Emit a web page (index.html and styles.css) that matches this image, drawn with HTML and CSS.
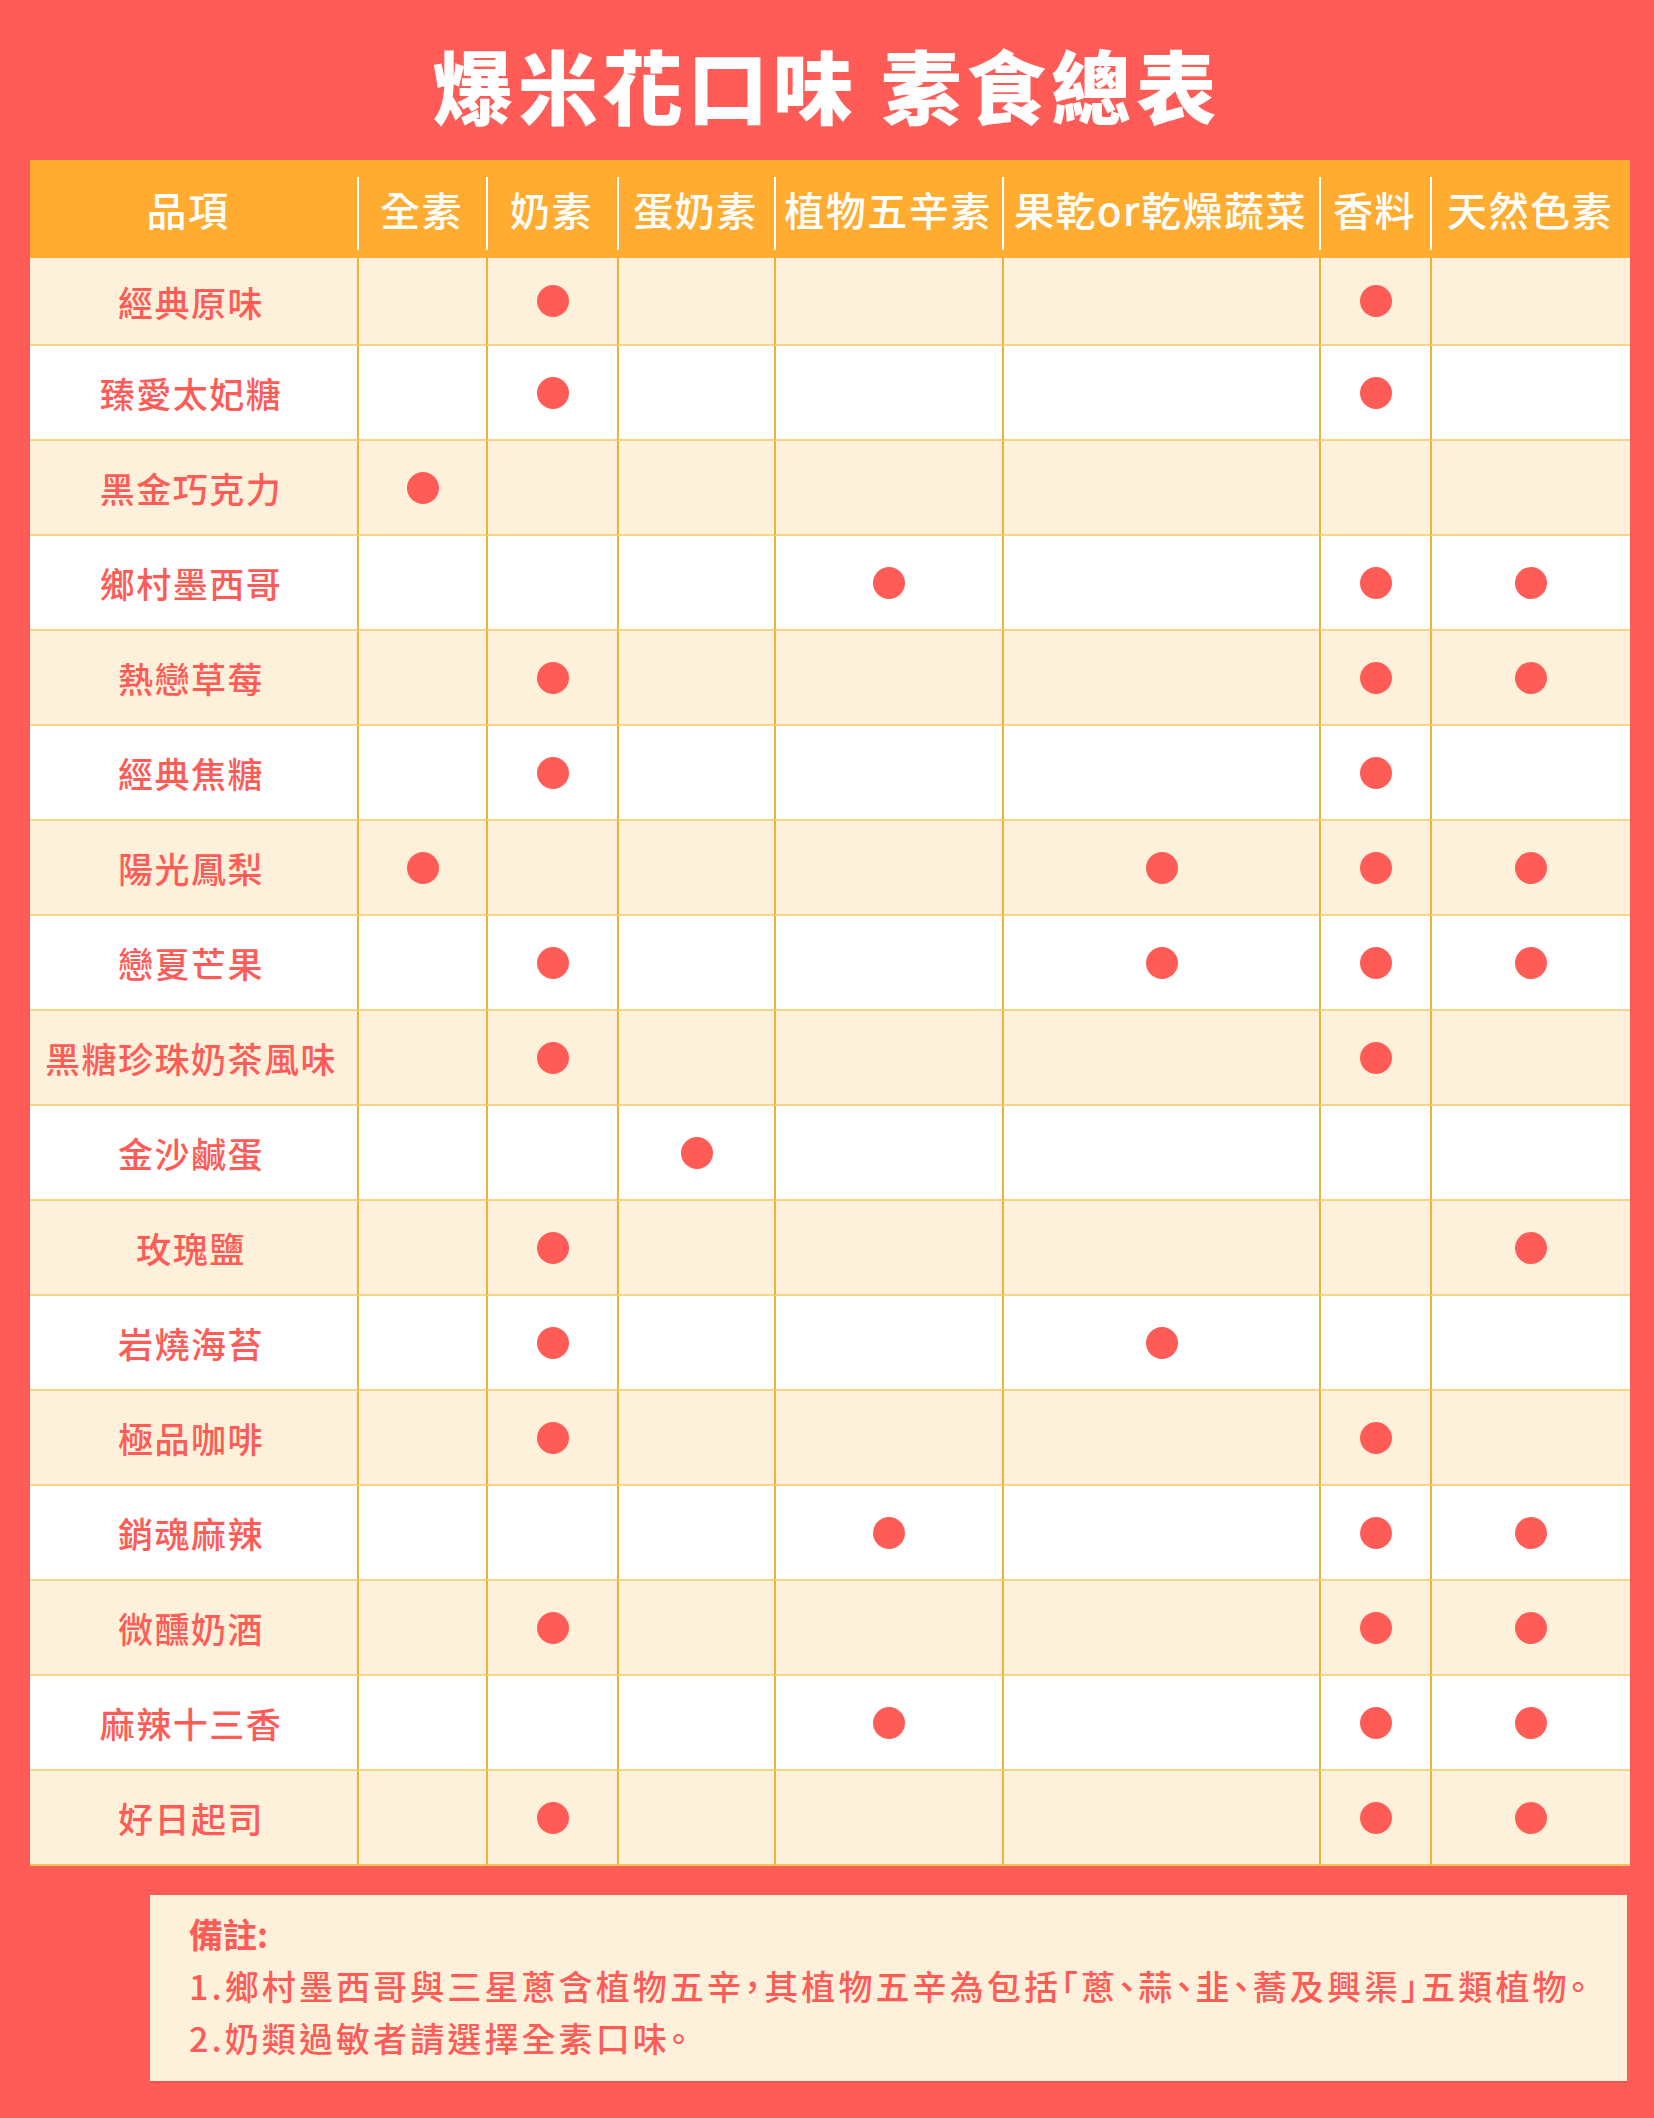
FILE: index.html
```html
<!DOCTYPE html>
<html lang="zh-Hant">
<head>
<meta charset="utf-8">
<title>爆米花口味 素食總表</title>
<link rel="stylesheet" href="styles.css">
</head>
<body>
<div class="page">
  <h1 class="title">爆米花口味 素食總表</h1>

  <table class="veg-table">
    <colgroup>
      <col class="c-name">
      <col class="c-vegan">
      <col class="c-lacto">
      <col class="c-ovo">
      <col class="c-five">
      <col class="c-fruit">
      <col class="c-spice">
      <col class="c-color">
    </colgroup>
    <thead>
      <tr>
        <th class="name">品項</th>
        <th>全素</th>
        <th>奶素</th>
        <th>蛋奶素</th>
        <th>植物五辛素</th>
        <th>果乾or乾燥蔬菜</th>
        <th>香料</th>
        <th>天然色素</th>
      </tr>
    </thead>
    <tbody>
      <tr class="first"><td class="name">經典原味</td><td></td><td><span class="dot"></span></td><td></td><td></td><td></td><td><span class="dot"></span></td><td></td></tr>
      <tr><td class="name">臻愛太妃糖</td><td></td><td><span class="dot"></span></td><td></td><td></td><td></td><td><span class="dot"></span></td><td></td></tr>
      <tr><td class="name">黑金巧克力</td><td><span class="dot"></span></td><td></td><td></td><td></td><td></td><td></td><td></td></tr>
      <tr><td class="name">鄉村墨西哥</td><td></td><td></td><td></td><td><span class="dot"></span></td><td></td><td><span class="dot"></span></td><td><span class="dot"></span></td></tr>
      <tr><td class="name">熱戀草莓</td><td></td><td><span class="dot"></span></td><td></td><td></td><td></td><td><span class="dot"></span></td><td><span class="dot"></span></td></tr>
      <tr><td class="name">經典焦糖</td><td></td><td><span class="dot"></span></td><td></td><td></td><td></td><td><span class="dot"></span></td><td></td></tr>
      <tr><td class="name">陽光鳳梨</td><td><span class="dot"></span></td><td></td><td></td><td></td><td><span class="dot"></span></td><td><span class="dot"></span></td><td><span class="dot"></span></td></tr>
      <tr><td class="name">戀夏芒果</td><td></td><td><span class="dot"></span></td><td></td><td></td><td><span class="dot"></span></td><td><span class="dot"></span></td><td><span class="dot"></span></td></tr>
      <tr><td class="name">黑糖珍珠奶茶風味</td><td></td><td><span class="dot"></span></td><td></td><td></td><td></td><td><span class="dot"></span></td><td></td></tr>
      <tr><td class="name">金沙鹹蛋</td><td></td><td></td><td><span class="dot"></span></td><td></td><td></td><td></td><td></td></tr>
      <tr><td class="name">玫瑰鹽</td><td></td><td><span class="dot"></span></td><td></td><td></td><td></td><td></td><td><span class="dot"></span></td></tr>
      <tr><td class="name">岩燒海苔</td><td></td><td><span class="dot"></span></td><td></td><td></td><td><span class="dot"></span></td><td></td><td></td></tr>
      <tr><td class="name">極品咖啡</td><td></td><td><span class="dot"></span></td><td></td><td></td><td></td><td><span class="dot"></span></td><td></td></tr>
      <tr><td class="name">銷魂麻辣</td><td></td><td></td><td></td><td><span class="dot"></span></td><td></td><td><span class="dot"></span></td><td><span class="dot"></span></td></tr>
      <tr><td class="name">微醺奶酒</td><td></td><td><span class="dot"></span></td><td></td><td></td><td></td><td><span class="dot"></span></td><td><span class="dot"></span></td></tr>
      <tr><td class="name">麻辣十三香</td><td></td><td></td><td></td><td><span class="dot"></span></td><td></td><td><span class="dot"></span></td><td><span class="dot"></span></td></tr>
      <tr><td class="name">好日起司</td><td></td><td><span class="dot"></span></td><td></td><td></td><td></td><td><span class="dot"></span></td><td><span class="dot"></span></td></tr>
    </tbody>
  </table>

  <div class="notes">
    <p class="notes-title">備註:</p>
    <p class="notes-line">1.鄉村墨西哥與三星蔥含植物五辛，其植物五辛為包括「蔥、蒜、韭、蕎及興渠」五類植物。</p>
    <p class="notes-line">2.奶類過敏者請選擇全素口味。</p>
  </div>
</div>
</body>
</html>
```

FILE: styles.css
```css
* {
  box-sizing: border-box;
}

html, body {
  margin: 0;
  padding: 0;
}

body {
  background: #ff5c57;
  font-family: "Noto Sans CJK TC", "Noto Sans CJK SC", "Noto Sans", sans-serif;
  color: #ff5c57;
}

.page {
  width: 1654px;
  min-height: 2118px;
  padding: 0 0 0 30px;
}

.title {
  margin: 0;
  height: 160px;
  padding-top: 43px;
  padding-right: 30px;
  font-size: 80px;
  line-height: 80px;
  font-weight: 900;
  letter-spacing: 5px;
  color: #ffffff;
  text-align: center;
}

.veg-table {
  width: 1600px;
  table-layout: fixed;
  border-collapse: separate;
  border-spacing: 0;
}

.c-name { width: 327px; }
.c-vegan { width: 129px; }
.c-lacto { width: 131px; }
.c-ovo { width: 157px; }
.c-five { width: 228px; }
.c-fruit { width: 317px; }
.c-spice { width: 111px; }
.c-color { width: 200px; }

.veg-table thead tr {
  height: 98px;
}

.veg-table th {
  padding: 0;
  background-color: #ffac31;
  color: #ffffff;
  font-size: 40px;
  font-weight: 500;
  letter-spacing: 1.5px;
  text-align: center;
  vertical-align: middle;
  white-space: nowrap;
}

.veg-table th + th {
  background-image: linear-gradient(#ffffff, #ffffff);
  background-repeat: no-repeat;
  background-position: 0 17px;
  background-size: 2px 73px;
}

.veg-table th.name {
  padding-right: 11px;
}

.veg-table tbody tr {
  height: 95px;
}

.veg-table tbody tr.first {
  height: 88px;
}

.veg-table tbody tr:nth-child(odd) td {
  background: #fef1db;
}

.veg-table tbody tr:nth-child(even) td {
  background: #ffffff;
}

.veg-table td {
  padding: 0;
  border-bottom: 2px solid #f6d585;
  text-align: center;
  vertical-align: middle;
}

.veg-table td + td {
  border-left: 2px solid #eab534;
}

.veg-table td.name {
  padding-right: 5px;
  font-size: 35px;
  font-weight: 500;
  letter-spacing: 1.5px;
  color: #ff5c57;
  white-space: nowrap;
}

.veg-table tbody tr:last-child td {
  border-bottom-color: #f0c75c;
}

.dot {
  display: block;
  width: 32px;
  height: 32px;
  margin: 0 auto;
  border-radius: 50%;
  background: #ff5c57;
}

.notes {
  width: 1477px;
  margin: 29px 0 0 120px;
  padding: 13px 30px 17px 39px;
  background: #fef1db;
  box-shadow: 0 2px 0 rgba(200, 60, 50, 0.25);
}

.notes p {
  margin: 0;
  font-size: 34px;
  line-height: 52px;
  color: #ff5c57;
  white-space: nowrap;
}

.notes-title {
  font-weight: 700;
}

.notes-line {
  font-weight: 500;
  letter-spacing: 3.1px;
  font-feature-settings: "halt";
}
```
